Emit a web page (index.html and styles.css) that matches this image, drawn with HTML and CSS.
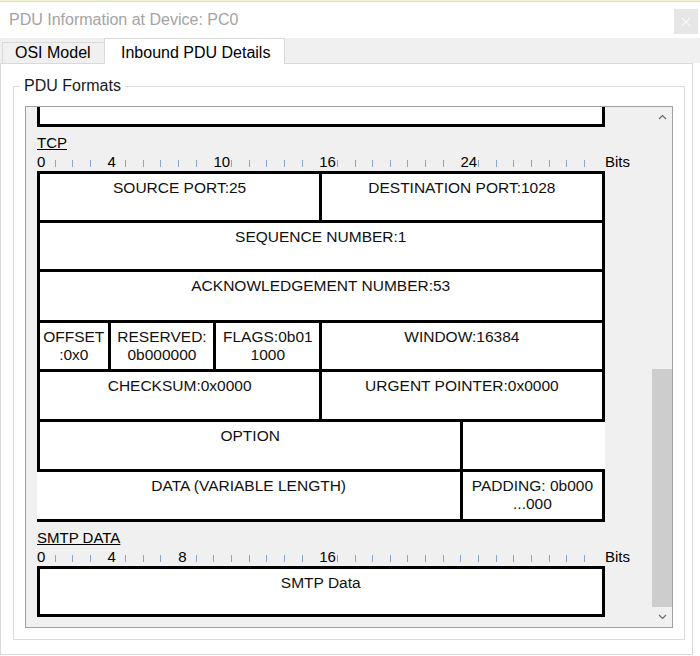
FILE: index.html
```html
<!DOCTYPE html>
<html>
<head>
<meta charset="utf-8">
<title>PDU Information at Device: PC0</title>
<link rel="stylesheet" href="styles.css">
</head>
<body>
<div class="topstrip"></div>
<div class="titlebar">
  <span class="title">PDU Information at Device: PC0</span>
  <span class="close"><svg width="10" height="10" viewBox="0 0 10 10"><path d="M1 1 L9 9 M9 1 L1 9" stroke="#f7f7f7" stroke-width="1.2" fill="none"/></svg></span>
</div>
<div class="tabs">
  <div class="tab">OSI Model</div>
  <div class="tab active">Inbound PDU Details</div>
</div>
<div class="panel">
  <fieldset class="group">
    <legend>PDU Formats</legend>
    <div class="scrollarea">
      <div class="content">
        <div class="clipped"></div>

        <div class="section-title">TCP</div>
        <div class="ruler">
          <div class="bits">
            <span class="nm">0</span><span class="tk"></span><span class="tk"></span><span class="tk"></span>
            <span class="nm">4</span><span class="tk"></span><span class="tk"></span><span class="tk"></span><span class="tk"></span><span class="tk"></span>
            <span class="nm">10</span><span class="tk"></span><span class="tk"></span><span class="tk"></span><span class="tk"></span><span class="tk"></span>
            <span class="nm">16</span><span class="tk"></span><span class="tk"></span><span class="tk"></span><span class="tk"></span><span class="tk"></span><span class="tk"></span><span class="tk"></span>
            <span class="nm">24</span><span class="tk"></span><span class="tk"></span><span class="tk"></span><span class="tk"></span><span class="tk"></span><span class="tk"></span><span class="tk"></span>
          </div>
          <span class="unit">Bits</span>
        </div>
        <div class="pdu tcp">
          <div class="c s16">SOURCE PORT:25</div>
          <div class="c s16">DESTINATION PORT:1028</div>
          <div class="c s32">SEQUENCE NUMBER:1</div>
          <div class="c s32">ACKNOWLEDGEMENT NUMBER:53</div>
          <div class="c s4">OFFSET<br>:0x0</div>
          <div class="c s6">RESERVED:<br>0b000000</div>
          <div class="c s6">FLAGS:0b01<br>1000</div>
          <div class="c s16">WINDOW:16384</div>
          <div class="c s16">CHECKSUM:0x0000</div>
          <div class="c s16">URGENT POINTER:0x0000</div>
          <div class="c s24">OPTION</div>
          <div class="c s8 open-right"></div>
          <div class="c s24 open-left">DATA (VARIABLE LENGTH)</div>
          <div class="c s8">PADDING: 0b000<br>...000</div>
        </div>

        <div class="section-title">SMTP DATA</div>
        <div class="ruler">
          <div class="bits">
            <span class="nm">0</span><span class="tk"></span><span class="tk"></span><span class="tk"></span>
            <span class="nm">4</span><span class="tk"></span><span class="tk"></span><span class="tk"></span>
            <span class="nm">8</span><span class="tk"></span><span class="tk"></span><span class="tk"></span><span class="tk"></span><span class="tk"></span><span class="tk"></span><span class="tk"></span>
            <span class="nm">16</span><span class="tk"></span><span class="tk"></span><span class="tk"></span><span class="tk"></span><span class="tk"></span><span class="tk"></span><span class="tk"></span><span class="tk"></span><span class="tk"></span><span class="tk"></span><span class="tk"></span><span class="tk"></span><span class="tk"></span><span class="tk"></span><span class="tk"></span>
          </div>
          <span class="unit">Bits</span>
        </div>
        <div class="pdu smtp">
          <div class="c s32">SMTP Data</div>
        </div>
      </div>
      <div class="scrollbar">
        <div class="sb-btn"><svg width="9" height="6" viewBox="0 0 9 6"><polyline points="1,5 4.5,1.5 8,5" fill="none" stroke="#6a6a6a" stroke-width="1.2"/></svg></div>
        <div class="sb-track"><div class="sb-thumb"></div></div>
        <div class="sb-btn"><svg width="9" height="6" viewBox="0 0 9 6"><polyline points="1,1 4.5,4.5 8,1" fill="none" stroke="#6a6a6a" stroke-width="1.2"/></svg></div>
      </div>
    </div>
  </fieldset>
</div>
</body>
</html>
```

FILE: styles.css
```css
* { box-sizing: border-box; }
html, body { margin: 0; padding: 0; }
body {
  width: 700px;
  height: 656px;
  overflow: hidden;
  background: #fff;
  font-family: "Liberation Sans", Arial, sans-serif;
  color: #1a1a1a;
}

.topstrip {
  height: 2px;
  background: #f4f1cc;
  border-bottom: 1px solid #e6e2aa;
}

.titlebar {
  height: 36px;
  display: flex;
  align-items: center;
  justify-content: space-between;
  padding-left: 9px;
  padding-right: 2px;
  background: #fff;
}
.title {
  font-size: 16px;
  color: #a4a4a4;
}
.close {
  width: 24px;
  height: 25px;
  margin-top: 3px;
  background: #e6e6e6;
  display: flex;
  align-items: center;
  justify-content: center;
}

.tabs {
  height: 25px;
  background: #f0f0f0;
  display: flex;
  align-items: flex-end;
  padding-left: 2px;
}
.tab {
  height: 21px;
  width: 102px;
  border: 1px solid #d9d9d9;
  border-right: none;
  border-bottom: none;
  padding-left: 12px;
  font-size: 16px;
  line-height: 20px;
  color: #000;
  background: #f0f0f0;
  white-space: nowrap;
}
.tab.active {
  height: 26px;
  width: 181px;
  border-right: 1px solid #d9d9d9;
  background: #fff;
  padding-left: 16px;
  padding-top: 4px;
  margin-bottom: -1px;
  position: relative;
  z-index: 1;
}

.panel {
  width: 693px;
  height: 592px;
  border: 1px solid #d9d9d9;
  background: #fff;
}

.group {
  margin: 13px 0 0 12px;
  width: 672px;
  padding: 11px 10px 11px 6px;
  border: 1px solid #dcdcdc;
  min-width: 0;
}
.group legend {
  padding: 0 4px;
  font-size: 16px;
  line-height: 18px;
  color: #1a1a1a;
}

.scrollarea {
  margin-left: 5px;
  width: 648px;
  height: 522px;
  border: 1px solid #a0a0a0;
  background: #f0f0f0;
  display: flex;
  overflow: hidden;
}
.content {
  flex: 1;
  padding-left: 11px;
  overflow: hidden;
}

.clipped {
  width: 568px;
  height: 20px;
  border: 3px solid #000;
  border-top: none;
  background: #fff;
}

.section-title {
  margin-top: 7px;
  font-size: 15px;
  line-height: 18px;
  color: #000;
  text-decoration: underline;
}

.ruler {
  display: flex;
  height: 19px;
  font-size: 15px;
  line-height: 20px;
  color: #000;
}
.bits {
  display: flex;
  width: 565px;
}
.bits .nm,
.bits .tk {
  flex: 0 0 17.656px;
  white-space: nowrap;
}
.bits .tk {
  display: flex;
  align-items: flex-end;
  padding-bottom: 4px;
}
.bits .tk::before {
  content: "";
  width: 1px;
  height: 7px;
  background: #86a6cc;
}
.unit {
  margin-left: 3px;
}

.pdu {
  display: grid;
  grid-template-columns: repeat(32, 17.656px);
  width: 568px;
  padding-right: 3px;
  padding-bottom: 3px;
}
.pdu.tcp { grid-template-rows: 49px 49px 51px 49px 50px 50px 50px; }
.pdu.smtp { grid-template-rows: 48px; }

.c {
  margin: 0 -3px -3px 0;
  border: 3px solid #000;
  background: #fff;
  text-align: center;
  font-size: 15.5px;
  line-height: 18px;
  padding-top: 5px;
  color: #111;
  white-space: nowrap;
}
.s4 { grid-column: span 4; }
.s6 { grid-column: span 6; }
.s8 { grid-column: span 8; }
.s16 { grid-column: span 16; }
.s24 { grid-column: span 24; }
.s32 { grid-column: span 32; }
.open-right { border-right: none; }
.open-left { border-left: none; }

.scrollbar {
  width: 20px;
  display: flex;
  flex-direction: column;
}
.sb-btn {
  height: 20px;
  display: flex;
  align-items: center;
  justify-content: center;
}
.sb-track {
  flex: 1;
  display: flex;
  flex-direction: column;
  justify-content: flex-end;
}
.sb-thumb {
  height: 238px;
  background: #cdcdcd;
}
```
